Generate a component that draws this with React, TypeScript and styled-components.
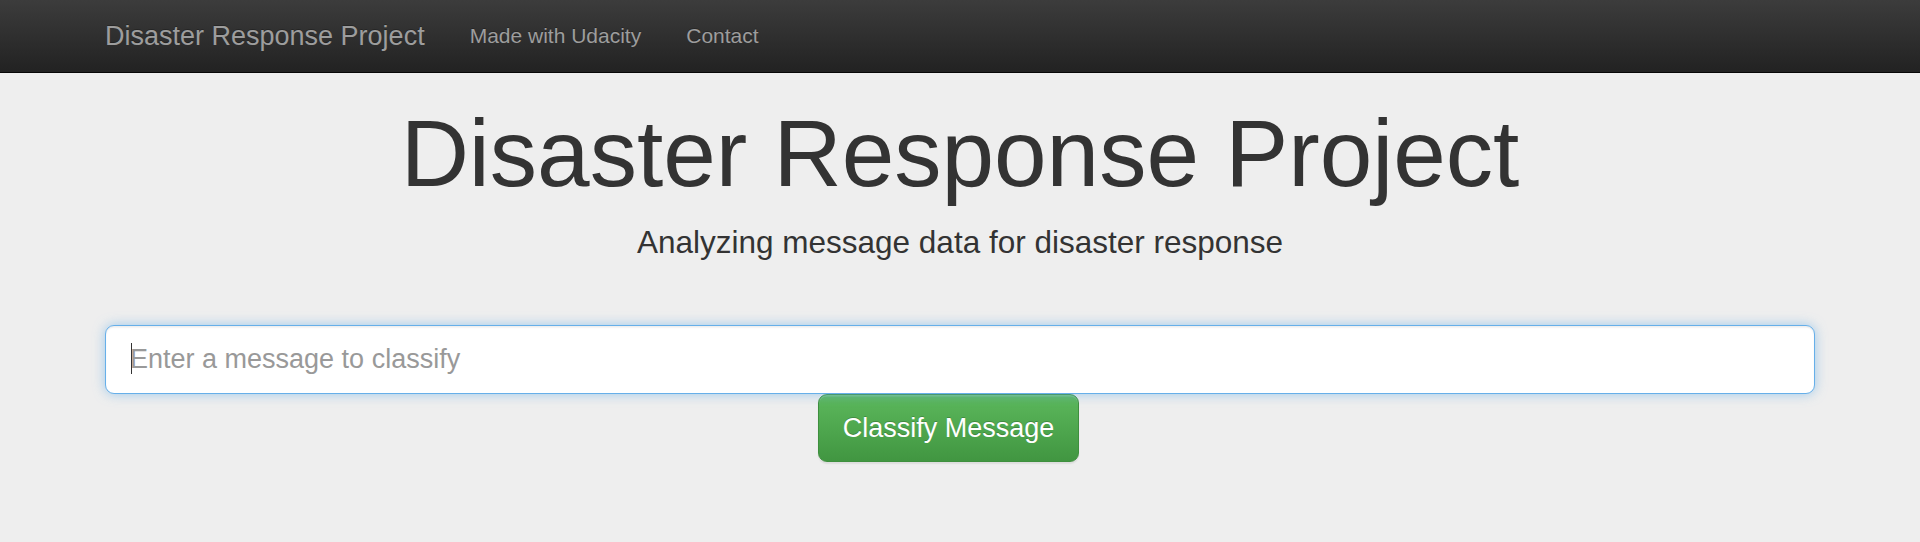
import React from "react";
import styled, { createGlobalStyle } from "styled-components";

const GlobalStyle = createGlobalStyle`
  html, body {
    margin: 0;
    padding: 0;
    background: #eeeeee;
    font-family: "Liberation Sans", Arial, Helvetica, sans-serif;
    color: #333333;
  }
  * { box-sizing: border-box; }
`;

const Navbar = styled.nav`
  height: 73px;
  background-image: linear-gradient(to bottom, #3c3c3c 0%, #222222 100%);
  border-bottom: 1px solid #080808;
`;

const Container = styled.div`
  max-width: 1755px;
  margin: 0 auto;
  padding: 0 22.5px;
`;

const NavInner = styled(Container)`
  display: flex;
  align-items: flex-start;
`;

const Brand = styled.a`
  margin-left: -22.5px;
  padding: 21px 22.5px;
  font-size: 27px;
  line-height: 30px;
  color: #9d9d9d;
  text-decoration: none;
  text-shadow: 0 -1px 0 rgba(0, 0, 0, 0.25);
`;

const NavList = styled.ul`
  display: flex;
  list-style: none;
  margin: 0;
  padding: 0;
`;

const NavLink = styled.a`
  display: block;
  padding: 21px 22.5px;
  font-size: 21px;
  line-height: 30px;
  color: #9d9d9d;
  text-decoration: none;
  text-shadow: 0 -1px 0 rgba(0, 0, 0, 0.25);
`;

const Jumbotron = styled.main`
  padding-top: 27.5px;
  padding-bottom: 80px;
  text-align: center;
`;

const Title = styled.h1`
  margin: 0 0 15px;
  font-size: 94.5px;
  line-height: 104px;
  font-weight: 400;
  color: #333333;
`;

const Lead = styled.p`
  margin: 0 0 60.5px;
  font-size: 31.5px;
  line-height: 45px;
  font-weight: 400;
  color: #333333;
`;

const Form = styled.form`
  display: flex;
  flex-direction: column;
  align-items: center;
`;

const InputWrap = styled.div`
  position: relative;
  width: 100%;
`;

const Input = styled.input`
  display: block;
  width: 100%;
  height: 69px;
  padding: 15px 24px;
  font-family: "Liberation Sans", Arial, Helvetica, sans-serif;
  font-size: 27px;
  line-height: 36px;
  color: #555555;
  background: #ffffff;
  border: 1.5px solid #66afe9;
  border-radius: 9px;
  outline: 0;
  box-shadow: inset 0 1.5px 1.5px rgba(0, 0, 0, 0.075), 0 0 12px rgba(102, 175, 233, 0.6);
  &::placeholder {
    color: #999999;
  }
`;

const Caret = styled.span`
  position: absolute;
  left: 25.5px;
  top: 18px;
  width: 1px;
  height: 31px;
  background: #333333;
  pointer-events: none;
`;

const SubmitButton = styled.button`
  margin-right: 23px;
  height: 68px;
  padding: 14px 24px 15px;
  font-family: "Liberation Sans", Arial, Helvetica, sans-serif;
  font-size: 27px;
  line-height: 36px;
  color: #ffffff;
  background-image: linear-gradient(to bottom, #5cb85c 0%, #419641 100%);
  border: 1.5px solid #3e8f3e;
  border-radius: 9px;
  text-shadow: 0 -1px 0 rgba(0, 0, 0, 0.2);
  box-shadow: inset 0 1.5px 0 rgba(255, 255, 255, 0.15), 0 1.5px 1.5px rgba(0, 0, 0, 0.075);
  cursor: pointer;
`;

export default function App() {
  return (
    <>
      <GlobalStyle />
      <Navbar>
        <NavInner>
          <Brand href="#">Disaster Response Project</Brand>
          <NavList>
            <li>
              <NavLink href="#">Made with Udacity</NavLink>
            </li>
            <li>
              <NavLink href="#">Contact</NavLink>
            </li>
          </NavList>
        </NavInner>
      </Navbar>
      <Jumbotron>
        <Container>
          <Title>Disaster Response Project</Title>
          <Lead>Analyzing message data for disaster response</Lead>
          <Form onSubmit={(e) => e.preventDefault()}>
            <InputWrap>
              <Input type="text" placeholder="Enter a message to classify" />
              <Caret />
            </InputWrap>
            <SubmitButton type="submit">Classify Message</SubmitButton>
          </Form>
        </Container>
      </Jumbotron>
    </>
  );
}
